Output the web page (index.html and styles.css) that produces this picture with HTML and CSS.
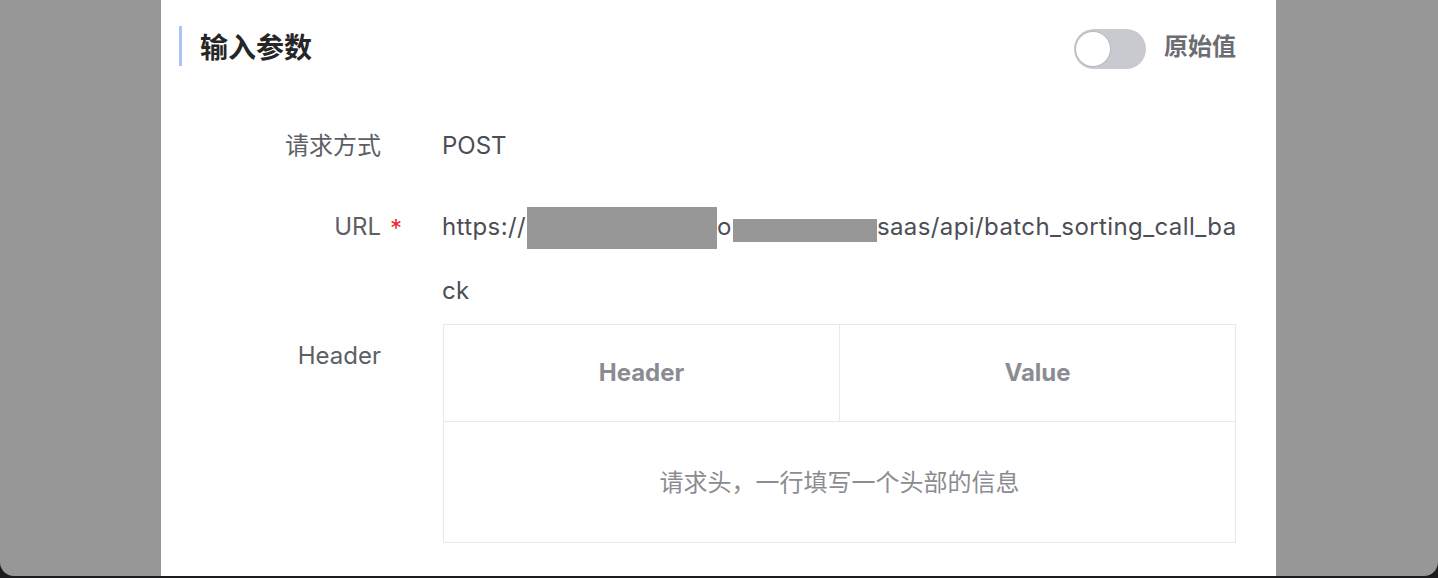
FILE: index.html
```html
<!DOCTYPE html>
<html lang="zh">
<head>
<meta charset="utf-8">
<title>输入参数</title>
<link rel="stylesheet" href="styles.css">
</head>
<body>
<div class="window">
  <div class="modal">
    <div class="modal-head">
      <div class="title">输入参数</div>
      <div class="raw">
        <span class="toggle"><span class="knob"></span></span>
        <span class="raw-label">原始值</span>
      </div>
    </div>
    <div class="form">
      <div class="row row-method">
        <div class="label">请求方式</div>
        <div class="value">POST</div>
      </div>
      <div class="row row-url">
        <div class="label required">URL</div>
        <div class="value url">https://<span class="redact r1"></span>o<span class="redact r2"></span>saas/api/batch_sorting_call_back</div>
      </div>
      <div class="row row-header">
        <div class="label">Header</div>
        <div class="value">
          <table class="htable">
            <thead>
              <tr><th>Header</th><th>Value</th></tr>
            </thead>
            <tbody>
              <tr><td colspan="2">请求头，一行填写一个头部的信息</td></tr>
            </tbody>
          </table>
        </div>
      </div>
    </div>
  </div>
</div>
</body>
</html>
```
FILE: styles.css
```css
html, body {
  margin: 0;
  padding: 0;
  background: #1c1c1e;
  height: 578px;
  overflow: hidden;
}
body {
  font-family: "Inter", "Noto Sans CJK SC", sans-serif;
}
.window {
  height: 576px;
  background: #979797;
  border-radius: 0 0 14px 14px;
  overflow: hidden;
  padding-left: 161px;
  box-sizing: border-box;
}
.modal {
  width: 1115px;
  height: 100%;
  background: #ffffff;
}
.modal-head {
  height: 96px;
  display: flex;
  align-items: center;
  justify-content: space-between;
  padding: 0 40px 0 18px;
}
.title {
  border-left: 3px solid #a9c4f6;
  padding-left: 18px;
  height: 40px;
  line-height: 40px;
  font-size: 28px;
  font-weight: 700;
  color: #262626;
  font-family: "Noto Sans CJK SC", sans-serif;
  position: relative;
  top: -2px;
}
.raw {
  display: flex;
  align-items: center;
  position: relative;
  top: 1px;
}
.toggle {
  position: relative;
  width: 72px;
  height: 40px;
  border-radius: 20px;
  background: #c9cacf;
  display: block;
}
.knob {
  position: absolute;
  left: 2px;
  top: 3px;
  width: 34px;
  height: 34px;
  border-radius: 50%;
  background: #ffffff;
  box-shadow: 0 0 0 1px #b9babf;
}
.raw-label {
  margin-left: 18px;
  font-size: 24px;
  line-height: 32px;
  font-weight: 700;
  color: #6c6d72;
  font-family: "Noto Sans CJK SC", sans-serif;
  position: relative;
  top: -4px;
}
.form {
  padding-top: 18px;
}
.row {
  display: flex;
}
.row-method {
  margin-bottom: 17px;
}
.row-url {
  margin-bottom: 1px;
}
.label {
  width: 220px;
  flex: none;
  text-align: right;
  font-size: 24px;
  line-height: 64px;
  color: #5c5f66;
  position: relative;
}
.label.required::after {
  content: "*";
  position: absolute;
  left: 229px;
  top: 2px;
  color: #f5222d;
  font-size: 24px;
}
.value {
  margin-left: 61px;
  width: 795px;
  font-size: 24px;
  line-height: 64px;
  color: #4b4e56;
}
.value.url {
  width: 800px;
  word-break: break-all;
  letter-spacing: 0.4px;
}
.redact {
  display: inline-block;
  background: #979797;
  vertical-align: middle;
}
.r1 {
  width: 190px;
  height: 42px;
  margin-left: 1px;
}
.r2 {
  width: 144px;
  height: 23px;
  margin-left: 1px;
  position: relative;
  top: 2px;
}
.htable {
  width: 793px;
  border-collapse: collapse;
  table-layout: fixed;
  margin-left: 1px;
}
.htable th, .htable td {
  border: 1px solid #e7e9ef;
  text-align: center;
  font-size: 24px;
  color: #8b8c91;
  padding: 0;
}
.htable th {
  line-height: 96px;
  font-weight: 700;
}
.htable td {
  padding-top: 2px;
  line-height: 118px;
  font-weight: 400;
}
```
